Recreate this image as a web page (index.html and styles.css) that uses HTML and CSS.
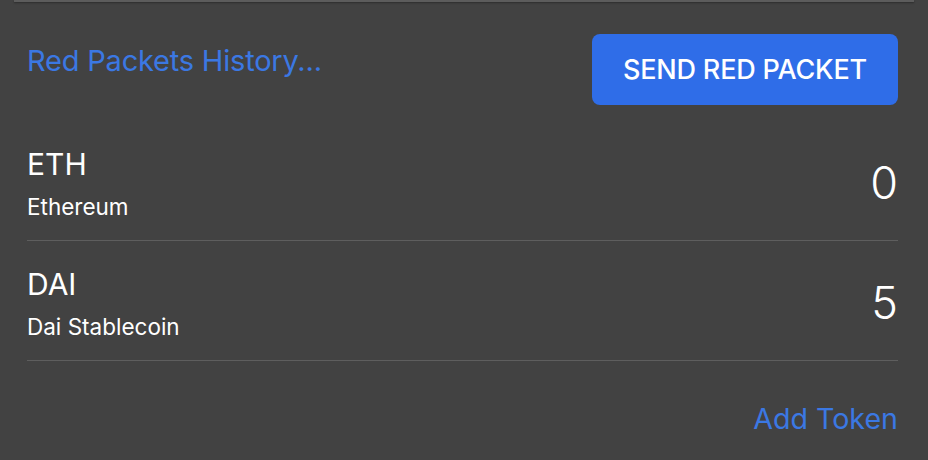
FILE: index.html
```html
<!DOCTYPE html>
<html>
<head>
<meta charset="utf-8">
<link rel="stylesheet" href="styles.css">
</head>
<body>
<div class="top-edge"></div>
<main class="panel">
  <div class="header">
    <a class="link history">Red Packets History...</a>
    <button class="send-btn">SEND RED PACKET</button>
  </div>
  <ul class="tokens">
    <li class="token">
      <div class="token-info">
        <div class="symbol">ETH</div>
        <div class="name">Ethereum</div>
      </div>
      <div class="amount">0</div>
    </li>
    <li class="token">
      <div class="token-info">
        <div class="symbol">DAI</div>
        <div class="name">Dai Stablecoin</div>
      </div>
      <div class="amount">5</div>
    </li>
  </ul>
  <div class="footer">
    <a class="link add-token">Add Token</a>
  </div>
</main>
</body>
</html>
```
FILE: styles.css
```css
html, body {
  margin: 0;
  padding: 0;
  background: #424242;
  font-family: Inter, "Noto Sans", sans-serif;
  color: #ffffff;
}
.top-edge {
  height: 2px;
  margin: 0 14px;
  background: #5c5c5c;
  box-shadow: 0 1px 2px rgba(0,0,0,0.35);
}
.panel {
  padding: 0 30px 0 27px;
}
.header {
  display: flex;
  justify-content: space-between;
  align-items: flex-start;
  padding-top: 32px;
}
.link {
  color: #3b78e3;
  text-decoration: none;
  cursor: pointer;
}
.history {
  font-size: 29px;
  line-height: 36px;
  margin-top: 9px;
  letter-spacing: -0.2px;
}
.send-btn {
  background: #2f6de8;
  color: #fff;
  border: none;
  border-radius: 8px;
  width: 306px;
  height: 71px;
  font-family: inherit;
  font-size: 27px;
  font-weight: 500;
  letter-spacing: -0.2px;
  padding: 0;
}
.tokens {
  list-style: none;
  margin: 16px 0 0;
  padding: 0;
}
.token {
  display: flex;
  justify-content: space-between;
  align-items: center;
  box-sizing: border-box;
  height: 120px;
  padding-top: 5px;
  border-bottom: 1px solid #5e5e5e;
}
.token-info {
  display: flex;
  flex-direction: column;
  gap: 11px;
}
.symbol {
  font-size: 30px;
  line-height: 36px;
}
.name {
  font-size: 22.5px;
  line-height: 28px;
}
.amount {
  font-size: 45px;
  line-height: 50px;
  font-weight: 300;
}
.footer {
  display: flex;
  justify-content: flex-end;
  padding-top: 39px;
}
.add-token {
  font-size: 28.6px;
  line-height: 38px;
}
```
